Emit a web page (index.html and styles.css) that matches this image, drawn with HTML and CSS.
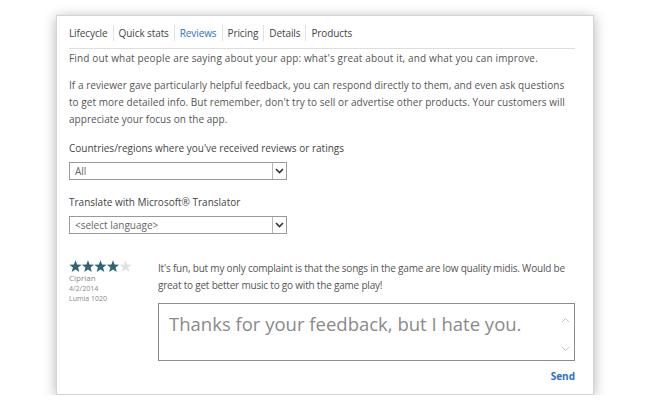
FILE: index.html
```html
<!DOCTYPE html>
<html lang="en">
<head>
    <meta charset="UTF-8">
    <title>Reviews</title>
    <link rel="stylesheet" href="styles.css">
</head>
<body>
    <div class="card">
        <nav class="tabs">
            <span class="tab">Lifecycle</span>
            <span class="tab">Quick stats</span>
            <span class="tab active">Reviews</span>
            <span class="tab">Pricing</span>
            <span class="tab">Details</span>
            <span class="tab">Products</span>
        </nav>

        <p class="intro">Find out what people are saying about your app: what's great about it, and what you can improve.</p>
        <p class="advice">If a reviewer gave particularly helpful feedback, you can respond directly to them, and even ask questions to get more detailed info. But remember, don't try to sell or advertise other products. Your customers will appreciate your focus on the app.</p>

        <label class="field-label">Countries/regions where you've received reviews or ratings</label>
        <div class="select">
            <span class="select-value">All</span>
            <span class="select-arrow">
                <svg width="9" height="6" viewBox="0 0 9 6"><polyline points="1,1 4.5,4.5 8,1" fill="none" stroke="#333" stroke-width="1.6"/></svg>
            </span>
        </div>

        <label class="field-label">Translate with Microsoft® Translator</label>
        <div class="select">
            <span class="select-value">&lt;select language&gt;</span>
            <span class="select-arrow">
                <svg width="9" height="6" viewBox="0 0 9 6"><polyline points="1,1 4.5,4.5 8,1" fill="none" stroke="#333" stroke-width="1.6"/></svg>
            </span>
        </div>

        <div class="review">
            <div class="reviewer">
                <svg class="stars" width="64" height="13" viewBox="0 0 64 13">
                    <g fill="#2f6674">
                        <polygon points="6.5,0.3 8.1,4.6 12.6,4.7 9.1,7.5 10.3,11.9 6.5,9.4 2.7,11.9 3.9,7.5 0.4,4.7 4.9,4.6"/>
                        <polygon transform="translate(12.5,0)" points="6.5,0.3 8.1,4.6 12.6,4.7 9.1,7.5 10.3,11.9 6.5,9.4 2.7,11.9 3.9,7.5 0.4,4.7 4.9,4.6"/>
                        <polygon transform="translate(25,0)" points="6.5,0.3 8.1,4.6 12.6,4.7 9.1,7.5 10.3,11.9 6.5,9.4 2.7,11.9 3.9,7.5 0.4,4.7 4.9,4.6"/>
                        <polygon transform="translate(37.5,0)" points="6.5,0.3 8.1,4.6 12.6,4.7 9.1,7.5 10.3,11.9 6.5,9.4 2.7,11.9 3.9,7.5 0.4,4.7 4.9,4.6"/>
                    </g>
                    <polygon fill="#e2e2e2" transform="translate(50,0)" points="6.5,0.3 8.1,4.6 12.6,4.7 9.1,7.5 10.3,11.9 6.5,9.4 2.7,11.9 3.9,7.5 0.4,4.7 4.9,4.6"/>
                </svg>
                <div class="reviewer-name">Ciprian</div>
                <div class="reviewer-meta">4/2/2014</div>
                <div class="reviewer-meta">Lumia 1020</div>
            </div>
            <div class="review-body">
                <p class="review-text">It's fun, but my only complaint is that the songs in the game are low quality midis. Would be great to get better music to go with the game play!</p>
                <div class="reply">
                    <span class="reply-text">Thanks for your feedback, but I hate you.</span>
                    <span class="reply-scroll">
                        <svg width="9" height="6" viewBox="0 0 9 6"><polyline points="1,5 4.5,1.5 8,5" fill="none" stroke="#c4c4c4" stroke-width="1"/></svg>
                        <svg width="9" height="6" viewBox="0 0 9 6"><polyline points="1,1 4.5,4.5 8,1" fill="none" stroke="#c4c4c4" stroke-width="1"/></svg>
                    </span>
                </div>
                <div class="send-row"><a href="#" class="send">Send</a></div>
            </div>
        </div>
    </div>
</body>
</html>
```

FILE: styles.css
```css
body {
    margin: 0;
    padding: 15px 0 0 56px;
    background: #fff;
    font-family: "Open Sans", "Noto Sans", sans-serif;
    font-size: 10px;
    color: #555;
}
.card {
    box-sizing: border-box;
    width: 538px;
    height: 380px;
    padding: 9px 18px 0 12px;
    background: #fff;
    border: 1px solid #d4d4d4;
    box-shadow: 0 2px 12px rgba(0,0,0,0.3);
}
.tabs {
    display: flex;
    line-height: 16px;
    padding-bottom: 7px;
    border-bottom: 1px solid #dedede;
    color: #444;
    letter-spacing: -0.1px;
}
.tab {
    padding: 0 5px 0 5px;
    border-left: 1px solid #e2e2e2;
}
.tab:first-child {
    padding-left: 0;
    border-left: none;
}
.tab.active {
    color: #2d6fc4;
}
p {
    margin: 0;
    line-height: 17px;
    letter-spacing: 0.15px;
}
.intro {
    margin-top: 1px;
}
.advice {
    margin-top: 10px;
    letter-spacing: 0.05px;
}
.field-label {
    display: block;
    margin-top: 12px;
    line-height: 17px;
    color: #444;
}
.select {
    display: flex;
    box-sizing: border-box;
    width: 218px;
    height: 18px;
    margin-top: 5px;
    border: 1px solid #9a9a9a;
    background: #fff;
}
.select + .field-label {
    margin-top: 14px;
}
.select-value {
    flex: 1;
    padding-left: 5px;
    line-height: 16px;
    color: #666;
}
.select-arrow {
    display: flex;
    align-items: center;
    justify-content: center;
    width: 13px;
    border-left: 1px solid #b8b8b8;
}
.review {
    display: flex;
    margin-top: 25px;
}
.reviewer {
    width: 89px;
    flex-shrink: 0;
    padding-top: 1px;
    font-size: 7px;
    line-height: 10.5px;
    color: #888;
}
.stars {
    display: block;
}
.reviewer-name {
    font-size: 8px;
}
.review-body {
    flex: 1;
}
.review-text {
    padding-top: 1px;
    letter-spacing: -0.2px;
}
.reply {
    display: flex;
    box-sizing: border-box;
    height: 58px;
    margin-top: 9px;
    border: 1px solid #8c8c8c;
    padding: 7px 4px 8px 10px;
}
.reply-text {
    flex: 1;
    font-size: 18.5px;
    line-height: 26px;
    color: #8a8a8a;
}
.reply-scroll {
    display: flex;
    flex-direction: column;
    justify-content: space-between;
    padding: 6px 0 0;
}
.send-row {
    display: flex;
    justify-content: flex-end;
    margin-top: 8px;
}
.send {
    color: #2d6fc4;
    font-weight: bold;
    text-decoration: none;
    line-height: 14px;
}
```
